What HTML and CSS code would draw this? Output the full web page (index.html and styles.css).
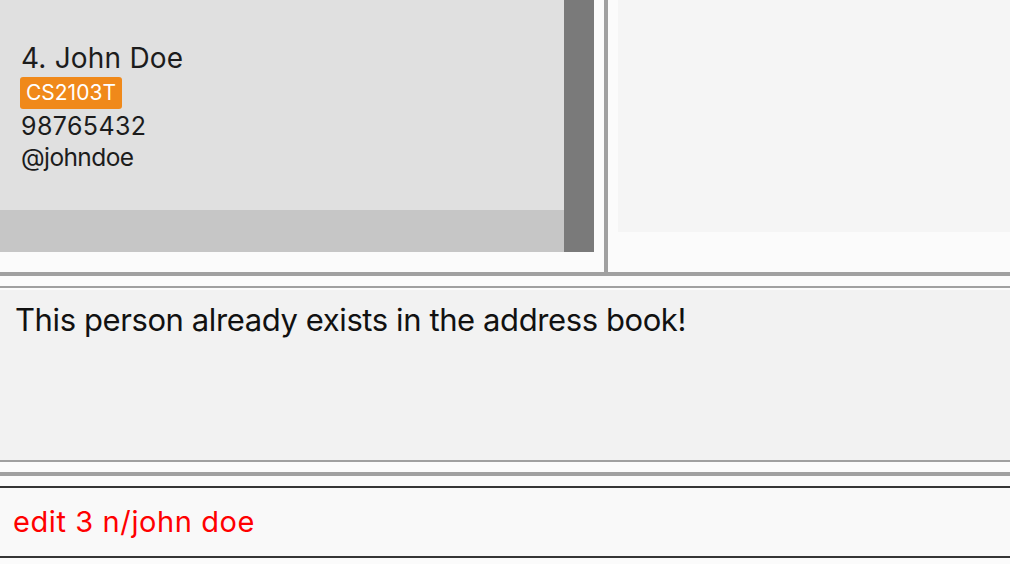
FILE: index.html
```html
<!DOCTYPE html>
<html>
<head>
<meta charset="utf-8">
<link rel="stylesheet" href="styles.css">
</head>
<body>
<div class="app">
  <div class="top">
    <div class="list-pane">
      <div class="list">
        <div class="cards">
          <div class="card">
            <div class="name">4. John Doe</div>
            <div class="tags"><span class="tag">CS2103T</span></div>
            <div class="phone">98765432</div>
            <div class="handle">@johndoe</div>
          </div>
          <div class="card-rest"></div>
        </div>
        <div class="scrollbar"></div>
      </div>
    </div>
    <div class="vdivider"></div>
    <div class="detail-pane">
      <div class="detail"></div>
    </div>
  </div>
  <div class="hline thick"></div>
  <div class="gap"></div>
  <div class="hline thin"></div>
  <div class="gap-sm"></div>
  <div class="result">This person already exists in the address book!</div>
  <div class="hline thin"></div>
  <div class="gap"></div>
  <div class="hline thick"></div>
  <div class="gap"></div>
  <div class="command">edit 3 n/john doe</div>
  <div class="gap-end"></div>
</div>
</body>
</html>
```

FILE: styles.css
```css
html, body {
  margin: 0;
  padding: 0;
  background: #fbfbfb;
  overflow: hidden;
}

.app {
  width: 1010px;
  height: 564px;
  font-family: Inter, "Noto Sans", sans-serif;
  display: flex;
  flex-direction: column;
}

.top {
  height: 272px;
  display: flex;
}

.list-pane {
  width: 604px;
  height: 272px;
}

.list {
  width: 594px;
  height: 252px;
  display: flex;
}

.cards {
  width: 564px;
  display: flex;
  flex-direction: column;
}

.card {
  height: 210px;
  box-sizing: border-box;
  background: #e0e0e0;
  padding: 42px 0 0 21px;
  color: #1c1c1c;
}

.name {
  font-size: 28px;
  line-height: 32px;
  letter-spacing: 0.2px;
}

.tags {
  margin-top: 3px;
  display: flex;
}

.tag {
  display: block;
  height: 32px;
  line-height: 32px;
  padding: 0 6px 0 6px;
  margin-left: -1px;
  background: #f0891a;
  color: #ffffff;
  border-radius: 3px;
  font-size: 21px;
}

.phone {
  margin-top: 1px;
  font-size: 25px;
  line-height: 32px;
  letter-spacing: 0.4px;
}

.handle {
  font-size: 24.5px;
  line-height: 31px;
  letter-spacing: -0.6px;
}

.card-rest {
  flex: 1;
  background: #c6c6c6;
}

.scrollbar {
  width: 30px;
  background: #7a7a7a;
}

.vdivider {
  width: 4px;
  background: #a0a0a0;
}

.detail-pane {
  flex: 1;
  padding-left: 10px;
}

.detail {
  height: 232px;
  background: #f5f5f5;
}

.hline {
  background: #a0a0a0;
  flex: none;
}

.hline.thick {
  height: 4px;
}

.hline.thin {
  height: 2px;
}

.gap {
  height: 10px;
  flex: none;
}

.gap-sm {
  height: 2px;
  flex: none;
}

.result {
  height: 170px;
  box-sizing: border-box;
  background: #f2f2f2;
  padding: 10px 0 0 15px;
  font-size: 31px;
  line-height: 40px;
  letter-spacing: -0.4px;
  color: #111111;
  flex: none;
}

.command {
  height: 72px;
  box-sizing: border-box;
  border-top: 2px solid #363636;
  border-bottom: 2px solid #363636;
  background: #f9f9f9;
  padding: 16px 0 0 13px;
  font-size: 29px;
  line-height: 36px;
  letter-spacing: 0.6px;
  color: #ff0000;
  flex: none;
}

.gap-end {
  flex: 1;
}
```
